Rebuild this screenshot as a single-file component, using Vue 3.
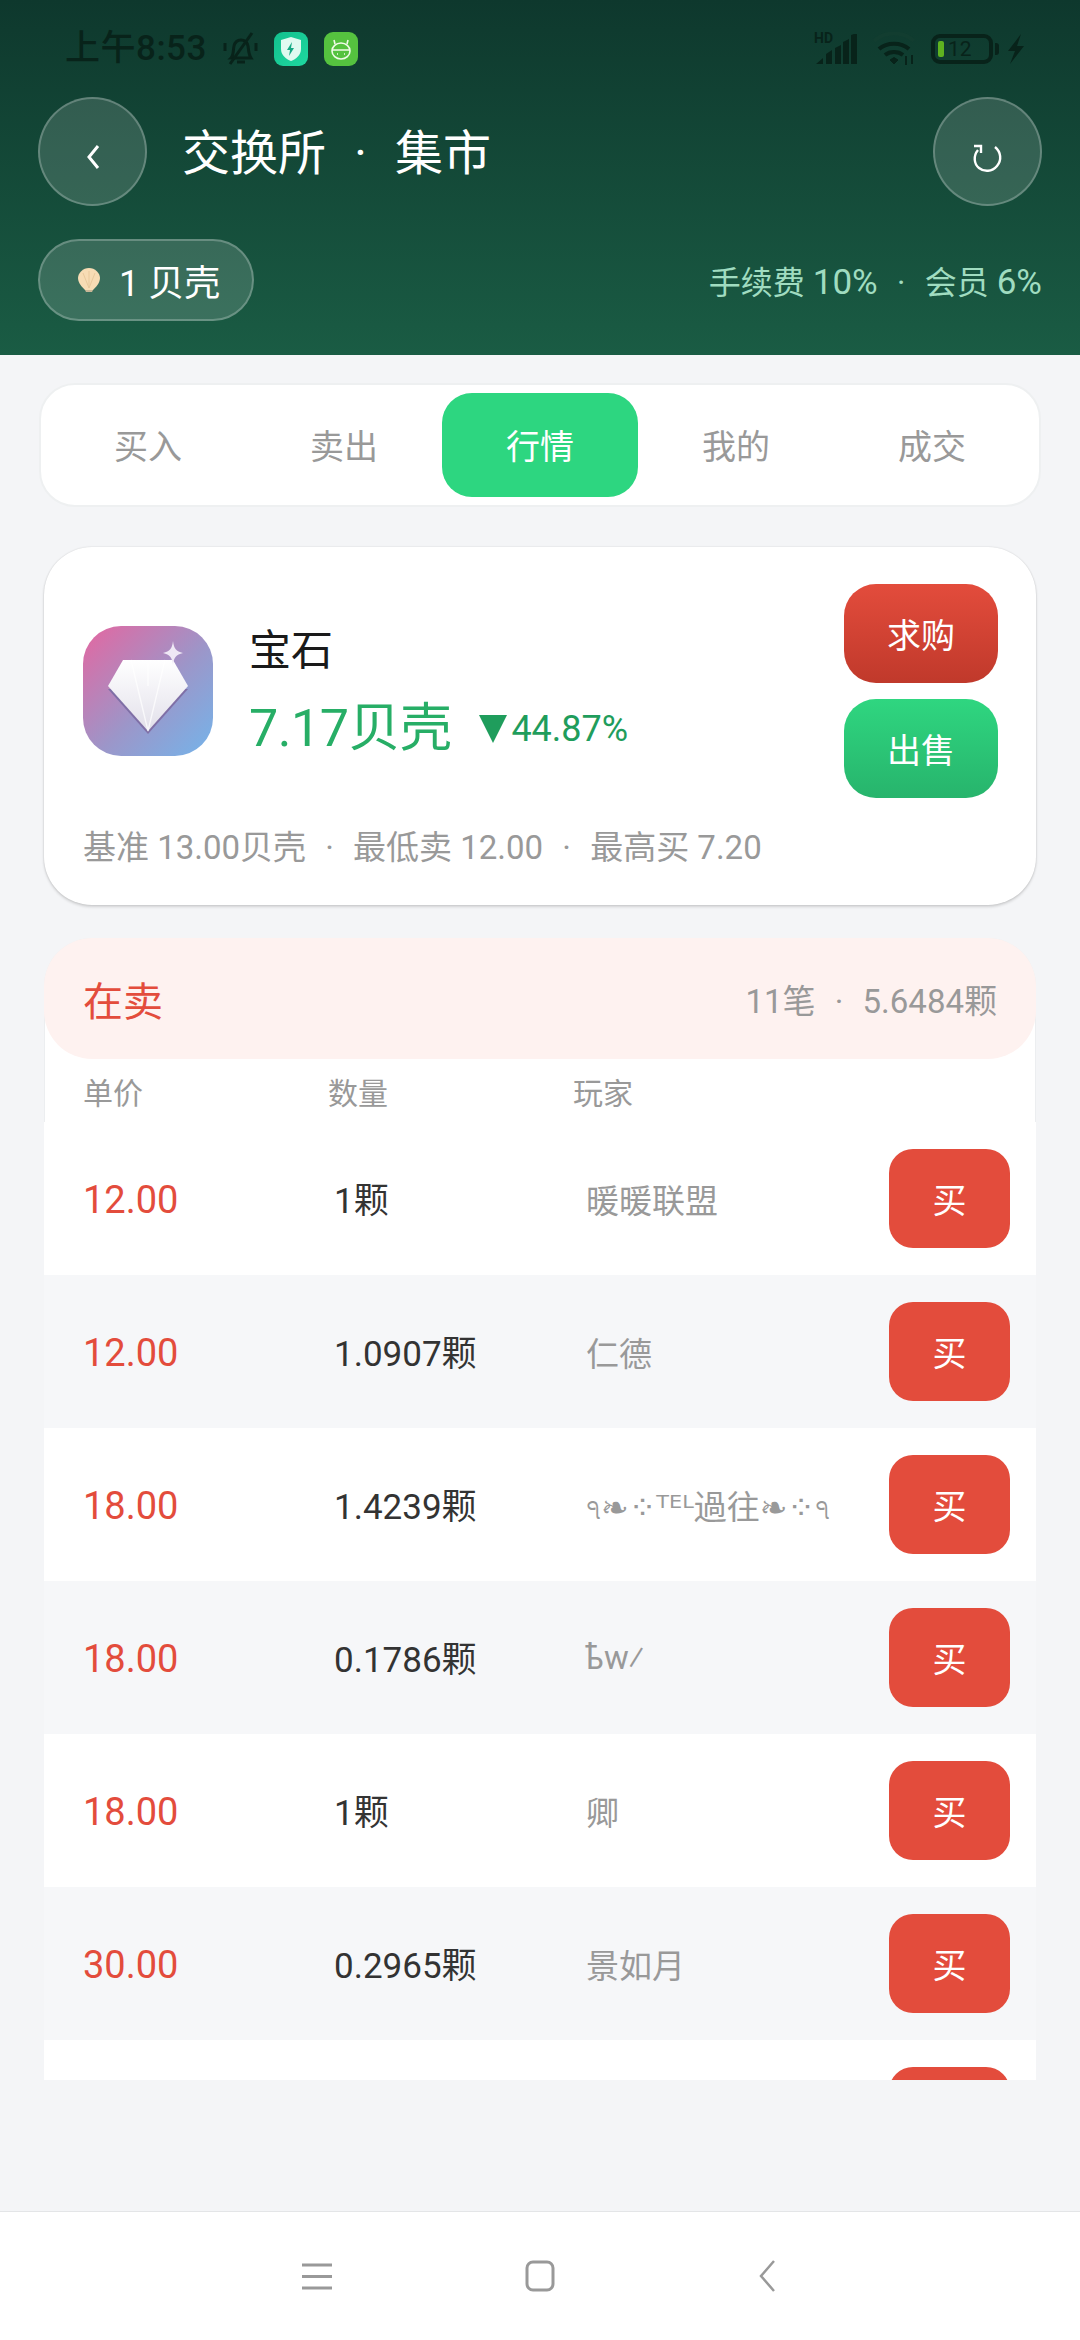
<script setup>
import { ref } from 'vue'

const tabs = ['买入', '卖出', '行情', '我的', '成交']
const activeTab = ref('行情')

// 最后一行被列表底部裁掉，只露出按钮顶部
const rows = [
  { price: '12.00', qty: '1颗', player: '暖暖联盟' },
  { price: '12.00', qty: '1.0907颗', player: '仁德' },
  { price: '18.00', qty: '1.4239颗', player: 'ঀ❧⁘ᵀᴱᴸ過往❧⁘ঀ' },
  { price: '18.00', qty: '0.1786颗', player: 'ҍw⁄' },
  { price: '18.00', qty: '1颗', player: '卿' },
  { price: '30.00', qty: '0.2965颗', player: '景如月' },
  { price: '', qty: '', player: '' }
]
</script>

<template>
  <div class="page">
    <!-- 顶部 -->
    <header class="hero">
      <div class="status">
        <div class="status-left">
          <span class="clock">上午8:53</span>
          <svg class="bell" width="36" height="36" viewBox="0 0 36 36" fill="none" stroke="#08231a" stroke-width="3">
            <path d="M8 27c3-3 2-8 3-12 1-4 4-6 7-6s6 2 7 6c.5 3 .5 8 3 12z" />
            <path d="M14 31h8" />
            <path d="M29 2 7 33" />
            <path d="M2 12v8M33 12v8" />
          </svg>
          <span class="app app-shield">
            <svg width="24" height="26" viewBox="0 0 24 26">
              <path d="M12 1 22 4v9c0 6-5 10-10 12C7 23 2 19 2 13V4z" fill="#dffaf0" />
              <path d="M13 6 8 14h3l-1 6 5-8h-3z" fill="#14a883" />
            </svg>
          </span>
          <span class="app app-android">
            <svg width="22" height="24" viewBox="0 0 22 24" fill="none" stroke="#f0fbe8" stroke-width="1.6">
              <ellipse cx="11" cy="14" rx="9" ry="8" />
              <path d="M2 13h18M5 7 4 3M17 7l1-4" />
              <path d="M7 17h1M14 17h1" />
            </svg>
          </span>
        </div>
        <div class="status-right">
          <div class="signal">
            <span class="hd">HD</span>
            <svg width="42" height="30" viewBox="0 0 42 30" fill="#08231a">
              <path d="M1 30l7-6v6zM11 20l6-4v14h-6zM20 14l6-3v19h-6zM36 1l6-2v31h-6zM28 8l6-3v25h-6z" />
            </svg>
          </div>
          <svg width="42" height="34" viewBox="0 0 42 34" fill="none" stroke="#08231a" stroke-width="4">
            <path d="M1 9C12-1 30-1 41 9" stroke="#123d30" />
            <path d="M6 17c8-7 22-7 30 0" />
            <path d="M12 23c5-4 13-4 18 0" />
            <path d="M17 28l4-2.5 4 2.5-4 4z" fill="#08231a" stroke-width="1" />
            <path d="M33 24v9M39 23v9" stroke-width="2" />
          </svg>
          <div class="battery">
            <span class="battery-fill"></span>
            <span class="battery-num">12</span>
            <span class="battery-nub"></span>
          </div>
          <svg width="18" height="30" viewBox="0 0 18 30" fill="#08231a">
            <path d="M14 0 1 17h7L3 30 17 12h-7z" />
          </svg>
        </div>
      </div>

      <div class="topbar">
        <button class="round-btn">
          <svg width="14" height="26" viewBox="0 0 14 26" fill="none" stroke="#fff" stroke-width="3">
            <path d="M12 2 3 13l9 11" />
          </svg>
        </button>
        <h1 class="title">交换所<span class="title-dot">·</span>集市</h1>
        <button class="round-btn refresh">
          <svg width="30" height="30" viewBox="0 0 30 30" fill="none" stroke="#fff" stroke-width="2.4">
            <path d="M22 3c6 5 7 13 2 19-5 6-13 6-18 2C1 20 0 12 5 6" />
            <path d="M1 2h7v7" />
          </svg>
        </button>
      </div>

      <div class="wallet-row">
        <div class="wallet">
          <svg width="24" height="26" viewBox="0 0 24 26">
            <path d="M12 1c6 0 11 5 11 10 0 5-4 9-7 12H8C5 20 1 16 1 11 1 6 6 1 12 1z" fill="#f7dcb4" />
            <path d="M8 23h8l-1 2H9z" fill="#c9b696" />
            <path d="M12 21V4M12 21 6 6M12 21l6-15" stroke="#e8c99c" stroke-width="1" fill="none" />
          </svg>
          <span>1 贝壳</span>
        </div>
        <div class="fees">手续费 <span class="fee-num">10%</span><span class="fee-dot">·</span>会员 <span class="fee-num">6%</span></div>
      </div>
    </header>

    <main class="content">
      <!-- 标签 -->
      <nav class="tabs">
        <button
          v-for="tab in tabs"
          :key="tab"
          class="tab"
          :class="{ active: activeTab === tab }"
          @click="activeTab = tab"
        >
          {{ tab }}
        </button>
      </nav>

      <!-- 行情卡片 -->
      <section class="market">
        <div class="market-main">
          <div class="gem-icon">
            <svg width="130" height="130" viewBox="0 0 130 130">
              <defs>
                <linearGradient id="gem" x1="0" y1="0" x2="0" y2="1">
                  <stop offset="0" stop-color="#ffffff" />
                  <stop offset="1" stop-color="#e2e0ea" />
                </linearGradient>
              </defs>
              <path d="M25 63 65 108l40-45z" fill="#7f6fa6" />
              <path d="M40 34h50l15 26-40 45-40-45z" fill="url(#gem)" />
              <path d="M48 34 65 105 82 34M65 34v26" stroke="#fff" stroke-width="1.4" fill="none" opacity=".7" />
              <path d="M90 15c1 8 3 10 10 12-7 2-9 4-10 12-1-8-3-10-10-12 7-2 9-4 10-12z" fill="#efe8f5" />
            </svg>
          </div>
          <div class="market-info">
            <div class="gem-name">宝石</div>
            <div class="gem-price">
              <span class="price-big">7.17贝壳</span>
              <span class="price-change"><i class="down"></i>44.87%</span>
            </div>
          </div>
          <div class="market-actions">
            <button class="action bid">求购</button>
            <button class="action ask">出售</button>
          </div>
        </div>
        <div class="market-sub">基准 13.00贝壳<b>·</b>最低卖 12.00<b>·</b>最高买 7.20</div>
      </section>

      <!-- 在卖列表 -->
      <section class="sell">
        <div class="sell-top">
          <div class="sell-head">
            <span class="sell-title">在卖</span>
            <span class="sell-count">11笔<b>·</b>5.6484颗</span>
          </div>
          <div class="cols">
            <span class="col-a">单价</span>
            <span class="col-b">数量</span>
            <span>玩家</span>
          </div>
        </div>
        <div class="list">
          <div v-for="(row, i) in rows" :key="i" class="row">
            <span class="row-price">{{ row.price }}</span>
            <span class="row-qty">{{ row.qty }}</span>
            <span class="row-player">{{ row.player }}</span>
            <button class="buy">{{ row.price ? '买' : '' }}</button>
          </div>
        </div>
      </section>
    </main>

    <!-- 系统导航 -->
    <footer class="sysnav">
      <svg width="30" height="27" viewBox="0 0 30 27" fill="none" stroke="#999" stroke-width="3">
        <path d="M0 2h30M0 13.500h30M0 25h30" />
      </svg>
      <svg class="nav-home" width="30" height="32" viewBox="0 0 30 32" fill="none" stroke="#999" stroke-width="3">
        <rect x="2" y="2" width="26" height="28" rx="6" />
      </svg>
      <svg width="17" height="32" viewBox="0 0 17 32" fill="none" stroke="#999" stroke-width="2.5">
        <path d="M16 1 3 16l13 15" />
      </svg>
    </footer>
  </div>
</template>

<style>
html, body {
  margin: 0;
  background: #f4f5f7;
}
</style>

<style scoped>
.page {
  width: 1080px;
  height: 2340px;
  display: flex;
  flex-direction: column;
  background: #f4f5f7;
  overflow: hidden;
  font-family: Roboto, "Noto Sans CJK SC", "DejaVu Sans", sans-serif;
}

button {
  font-family: inherit;
  border: none;
  padding: 0;
  cursor: pointer;
}

/* ===== 顶部 ===== */
.hero {
  height: 355px;
  box-sizing: border-box;
  padding: 0 38px;
  background: linear-gradient(180deg, #0e382d 0%, #1a5c44 100%);
  flex-shrink: 0;
}

.status {
  height: 97px;
  display: flex;
  justify-content: space-between;
  align-items: flex-start;
  padding-top: 30px;
  box-sizing: border-box;
}

.status-left,
.status-right {
  display: flex;
  align-items: center;
  height: 38px;
}

.status-left {
  padding-left: 27px;
}

.clock {
  font-size: 35px;
  font-weight: 500;
  color: #08231a;
  letter-spacing: 0.5px;
  line-height: 38px;
}

.bell {
  margin-left: 16px;
}

.app {
  width: 34px;
  height: 34px;
  border-radius: 9px;
  display: flex;
  align-items: center;
  justify-content: center;
}

.app-shield {
  margin-left: 15px;
  background: linear-gradient(135deg, #12c08d, #1fd8a0);
}

.app-android {
  margin-left: 16px;
  background: #55c23f;
}

.status-right {
  padding-right: 17px;
  gap: 16px;
}

.signal {
  position: relative;
  width: 42px;
  height: 30px;
}

.hd {
  position: absolute;
  left: -1px;
  top: -3px;
  font-size: 14px;
  line-height: 14px;
  font-weight: 700;
  color: #08231a;
}

.battery {
  position: relative;
  width: 62px;
  height: 30px;
  box-sizing: border-box;
  border: 4px solid #08231a;
  border-radius: 9px;
  display: flex;
  align-items: center;
  margin-right: -2px;
}

.battery-fill {
  width: 6px;
  height: 16px;
  margin-left: 3px;
  border-radius: 2px;
  background: #5fb320;
}

.battery-num {
  margin-left: 4px;
  font-size: 21px;
  line-height: 22px;
  color: #08231a;
}

.battery-nub {
  position: absolute;
  right: -10px;
  top: 5px;
  width: 4px;
  height: 12px;
  border-radius: 0 3px 3px 0;
  background: #08231a;
}

.topbar {
  display: flex;
  align-items: center;
}

.round-btn {
  width: 109px;
  height: 109px;
  flex-shrink: 0;
  border-radius: 50%;
  box-sizing: border-box;
  border: 2px solid rgba(255, 255, 255, 0.24);
  background: rgba(255, 255, 255, 0.14);
  display: flex;
  align-items: center;
  justify-content: center;
  padding-top: 10px;
}

.refresh {
  margin-left: auto;
  padding-top: 14px;
}

.title {
  margin: 0 0 0 35px;
  padding-top: 4px;
  font-size: 48px;
  font-weight: 400;
  line-height: 60px;
  color: #fff;
}

.title-dot {
  display: inline-block;
  width: 69px;
  text-align: center;
}

.wallet-row {
  display: flex;
  justify-content: space-between;
  align-items: center;
  margin-top: 33px;
}

.wallet {
  width: 216px;
  height: 82px;
  box-sizing: border-box;
  border: 2px solid rgba(255, 255, 255, 0.24);
  border-radius: 41px;
  background: rgba(255, 255, 255, 0.15);
  display: flex;
  align-items: center;
  padding-left: 37px;
  gap: 18px;
  font-size: 36px;
  color: #fff;
}

.fees {
  font-size: 32px;
  color: #a0dcc0;
}

.fee-num {
  font-size: 35px;
}

.fee-dot {
  display: inline-block;
  width: 47px;
  text-align: center;
}

/* ===== 内容 ===== */
.content {
  flex: 1;
  padding: 28px 39px 0;
  box-sizing: border-box;
  min-height: 0;
}

.tabs {
  height: 124px;
  box-sizing: border-box;
  padding: 8px 9px;
  display: grid;
  grid-template-columns: repeat(5, 1fr);
  background: #fff;
  border: 2px solid #eef0f1;
  border-radius: 36px;
}

.tab {
  background: transparent;
  border-radius: 30px;
  font-size: 34px;
  color: #999;
  padding-bottom: 2px;
}

.tab.active {
  background: #2dd680;
  color: #fff;
}

.market {
  margin: 40px 5px 0;
  height: 358px;
  box-sizing: border-box;
  background: #fff;
  border-radius: 48px;
  box-shadow: 0 0 2px rgba(0, 0, 0, 0.14), 0 2px 3px rgba(0, 0, 0, 0.14);
  padding: 37px 38px 0 39px;
}

.market-main {
  display: flex;
  align-items: center;
  height: 214px;
}

.gem-icon {
  width: 130px;
  height: 130px;
  border-radius: 38px;
  overflow: hidden;
  background: linear-gradient(135deg, #e566a0 0%, #9c96c9 55%, #74b4ea 100%);
  flex-shrink: 0;
}

.market-info {
  margin-left: 36px;
  flex: 1;
  margin-top: 12px;
}

.gem-name {
  font-size: 42px;
  line-height: 56px;
  margin-top: -6px;
  color: #1a1a1a;
}

.gem-price {
  display: flex;
  align-items: center;
  margin-top: 14px;
}

.price-big {
  font-size: 52px;
  line-height: 72px;
  letter-spacing: -0.5px;
  color: #27ae66;
}

.price-change {
  display: flex;
  align-items: center;
  margin-left: 28px;
  font-size: 36px;
  color: #1f9d5c;
}

.down {
  width: 0;
  height: 0;
  margin-right: 4px;
  border-left: 14px solid transparent;
  border-right: 14px solid transparent;
  border-top: 28px solid #1f9d5c;
}

.market-actions {
  display: flex;
  flex-direction: column;
  gap: 16px;
  align-self: flex-start;
}

.action {
  width: 154px;
  height: 99px;
  border-radius: 32px;
  color: #fff;
  font-size: 34px;
}

.bid {
  background: linear-gradient(180deg, #e34c3c, #c0392b);
}

.ask {
  background: linear-gradient(180deg, #2fd680, #27b46c);
}

.market-sub {
  margin-top: 28px;
  font-size: 33px;
  line-height: 44px;
  color: #999;
}

.market-sub b,
.sell-count b {
  display: inline-block;
  width: 47px;
  text-align: center;
  font-weight: 400;
}

.sell {
  margin: 33px 5px 0;
  height: 1142px;
  overflow: hidden;
}

.sell-top {
  background: #fff;
  border: 1px solid #eceef0;
  border-bottom: none;
  border-radius: 48px 48px 0 0;
  box-sizing: border-box;
}

.sell-head {
  height: 121px;
  margin: -1px -1px 0;
  padding: 0 39px;
  background: #fef2f0;
  border-radius: 48px;
  display: flex;
  justify-content: space-between;
  align-items: center;
}

.sell-title {
  font-size: 40px;
  color: #e34c3c;
}

.sell-count {
  font-size: 33px;
  color: #999;
}

.cols {
  height: 63px;
  display: flex;
  align-items: center;
  padding-left: 38px;
  font-size: 30px;
  color: #999;
}

.col-a,
.col-b {
  width: 245px;
}

.row {
  height: 153px;
  display: flex;
  align-items: center;
  padding: 0 26px 0 39px;
  background: #fff;
}

.row:nth-child(even) {
  background: #f6f7f9;
}

.row-price {
  width: 251px;
  padding-top: 2px;
  font-size: 38px;
  color: #e34c3c;
}

.row-qty {
  width: 252px;
  padding-bottom: 2px;
  font-size: 35px;
  color: #333;
}

.row-player {
  flex: 1;
  font-size: 33px;
  color: #999;
}

.buy {
  width: 121px;
  height: 99px;
  border-radius: 24px;
  background: #e34c3c;
  color: #fff;
  font-size: 34px;
}

/* ===== 系统导航 ===== */
.sysnav {
  height: 129px;
  flex-shrink: 0;
  box-sizing: border-box;
  background: #fff;
  border-top: 1px solid #e3e5e7;
  display: flex;
  justify-content: center;
  align-items: center;
  padding-right: 3px;
}

.nav-home {
  margin: 0 203px 0 193px;
}
</style>
